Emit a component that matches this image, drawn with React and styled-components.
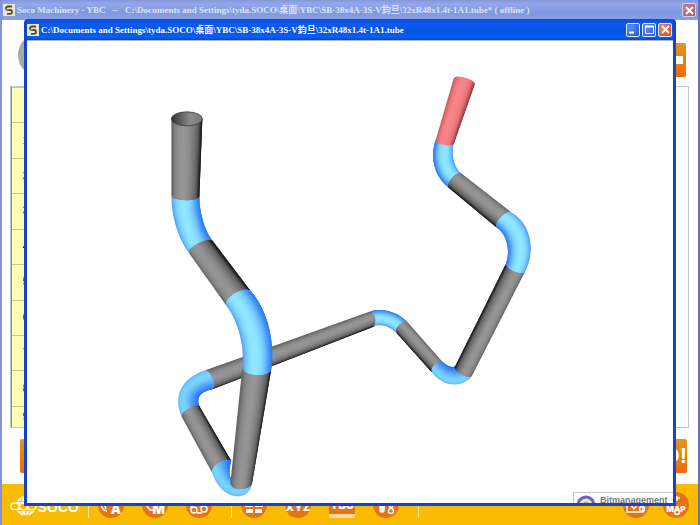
import React from "react";
import styled, { createGlobalStyle } from 'styled-components'

const path = "C:\\Documents and Settings\\tyda.SOCO\\桌面\\YBC\\SB-38x4A-3S-V鈞旦\\32xR48x1.4t-1A1.tube"

const steel = ['#606060', '#828282', '#909090', '#969696', '#949494', '#888888', '#767676', '#5c5c5c', '#101010']
const bend = ['#4a9cf4', '#76c8ff', '#88deff', '#90e8ff', '#8ee6ff', '#84daff', '#6ec2ff', '#4c9cf8', '#2b78ee']
const deepBend = ['#62bcfa', '#7ad4ff', '#78d0ff', '#6abcfe', '#54a2fa', '#3e8cf6', '#2270ea']
const marked = ['#c65a60', '#ee787c', '#f88688', '#f68486', '#f07e82', '#dc6e72', '#8a3a3c']

// a and b are the two long edges (2 points = straight, 4 = bezier), b is the darker side
// from / to push the ends out so they look round
const tubes = [
    { id: 'leg5', colors: steel, a: [[205, 370], [370, 311]], b: [[212, 389], [374, 326]], from: [4, 0], to: [4, -1] },
    { id: 'bend4', colors: deepBend, a: [[181, 416], [173, 397], [180, 378], [205, 370]], b: [[199, 406], [195, 395], [203, 391], [212, 389]], from: [-1, -3], to: [4, 0] },
    { id: 'bend5', colors: bend, a: [[373, 326], [382, 323], [390, 326], [397, 333]], b: [[370, 311], [383, 307], [398, 312], [408, 322]], from: [4, -1], to: [-3, -3] },
    { id: 'leg6', colors: steel, a: [[408, 322], [443, 362]], b: [[397, 333], [432, 372]], from: [-3, -3], to: [-2, -3] },
    { id: 'bend6', colors: deepBend, a: [[432, 372], [442, 386], [461, 389], [472, 376]], b: [[443, 362], [448, 366], [452, 368], [456, 366]], from: [-2, -3], to: [0, 2] },
    { id: 'bend8', colors: bend, a: [[454, 143], [451, 155], [455, 168], [462, 173]], b: [[436, 139], [430, 156], [434, 175], [449, 187]], from: [-1, 3], to: [-3, -3] },
    { id: 'leg8', colors: steel, a: [[462, 173], [512, 212]], b: [[449, 187], [497, 227]], from: [-3, -3], to: [-3, -3] },
    { id: 'bend7', colors: bend, a: [[512, 212], [531, 222], [537, 250], [525, 272]], b: [[497, 227], [508, 234], [511, 251], [506, 264]], from: [-3, -3], to: [-1, 3] },
    { id: 'leg7', colors: steel, a: [[525, 272], [472, 376]], b: [[506, 264], [455, 367]], from: [-1, 3], to: [-1, 3] },
    { id: 'end', colors: marked, a: [[454, 77], [436, 139]], b: [[475, 83], [454, 143]], from: [1, -3], to: [-1, 3] },
    { id: 'leg4', colors: steel, a: [[181, 416], [212, 473]], b: [[199, 406], [231, 461]], from: [-1, -3], to: [-3, -4] },
    { id: 'bend3', colors: deepBend, a: [[212, 473], [222, 503], [251, 502], [252, 482]], b: [[231, 461], [228, 470], [229, 478], [232, 484]], from: [-3, -4], to: [0, 3] },
    { id: 'leg3', colors: steel, a: [[242, 368], [230, 484]], b: [[271, 369], [252, 482]], from: [0, 6], to: [1, 6] },
    { id: 'bend1', colors: bend, a: [[171, 195], [171, 217], [178, 238], [189, 253]], b: [[199, 196], [199, 212], [204, 229], [212, 240]], from: [0, 4], to: [-4, -3] },
    { id: 'leg2', colors: steel, a: [[189, 253], [226, 305]], b: [[212, 240], [250, 290]], from: [-4, -3], to: [-4, -4] },
    { id: 'bend2', colors: bend, a: [[226, 305], [239, 322], [245, 350], [242, 368]], b: [[250, 290], [268, 310], [275, 343], [271, 369]], from: [-4, -4], to: [0, 6] },
    { id: 'leg1', colors: steel, a: [[171, 118], [171, 195]], b: [[202, 118], [199, 196]], from: [0, 7], to: [0, 4] },
]

const bands = 24

function mix(colors, u) {
    const at = u * (colors.length - 1)
    const i = Math.min(Math.floor(at), colors.length - 2)
    const rgb = [1, 3, 5].map((n) => {
        const c1 = parseInt(colors[i].slice(n, n + 2), 16)
        const c2 = parseInt(colors[i + 1].slice(n, n + 2), 16)
        return Math.round(c1 + (c2 - c1) * (at - i))
    })
    return `rgb(${rgb.join(',')})`
}

function line({ a, b, from, to }, u) {
    const round = Math.sqrt(Math.max(0, 1 - (2 * u - 1) ** 2))
    return a.map((p, i) => {
        const push = i === 0 ? from : i === a.length - 1 ? to : [0, 0]
        return [0, 1].map((k) => (p[k] + (b[i][k] - p[k]) * u + push[k] * round).toFixed(2))
    })
}

function draw(points) {
    const rest = points.slice(1).map((p) => p.join(' ')).join(' ')
    return `${points[0].join(' ')} ${points.length === 4 ? 'C' : 'L'} ${rest}`
}

// each band reaches under the next two, so no seam shows between them
function Tube({ tube }) {
    return (
        <g>
            {Array.from({ length: bands }, (_, i) => {
                const near = line(tube, i / bands)
                const far = line(tube, Math.min(1, (i + 3) / bands)).reverse()
                return <path
                    key={i}
                    d={`M ${draw(near)} L ${draw(far)} Z`}
                    fill={mix(tube.colors, (i + 0.5) / bands)}
                />
            })}
        </g>
    )
}

function Model() {
    return (
        <ModelStyled viewBox="27 40 646 463" role="img" aria-label="Bent tube">
            <defs>
                <linearGradient id="inside">
                    <stop offset="0" stopColor="#333" />
                    <stop offset="0.6" stopColor="#8a8a8a" />
                    <stop offset="1" stopColor="#777" />
                </linearGradient>
            </defs>
            {tubes.map((tube) => <Tube key={tube.id} tube={tube} />)}
            <ellipse cx="186.5" cy="118" rx="15.5" ry="7" fill="url(#inside)" stroke="#333" strokeWidth="0.8" />
        </ModelStyled>
    )
}

function AppMark() {
    return (
        <MarkStyled viewBox="0 0 12 12" aria-hidden="true">
            <rect width="12" height="12" fill="#e9e6d4" />
            <path d="M9 2.5 H5 Q3 2.5 3 4.2 Q3 6 5.5 6 H7 Q9 6 9 8 Q9 9.8 7 9.8 H4" fill="none" stroke="#4d4a35" strokeWidth="1.8" />
            <path d="M3 5 L6 6" stroke="#b99a30" strokeWidth="1" />
        </MarkStyled>
    )
}

function CloseIcon() {
    return (
        <svg width="9" height="9" viewBox="0 0 9 9" aria-hidden="true">
            <path d="M1 1 L8 8 M8 1 L1 8" stroke="#fff" strokeWidth="1.8" />
        </svg>
    )
}

function Globe() {
    return (
        <svg width="30" height="26" viewBox="0 0 30 26" aria-hidden="true">
            <circle cx="17" cy="14" r="11" fill="#fff" />
            <g fill="none" stroke="#fabb00" strokeWidth="1">
                <path d="M7 9 H27 M7 19 H27 M17 3 V25" />
                <ellipse cx="17" cy="14" rx="6" ry="11" />
            </g>
            <g fill="#fabb00" stroke="#fff" strokeWidth="1.6">
                <rect x="1" y="11" width="9" height="7" rx="3" />
                <rect x="10" y="11" width="9" height="7" rx="3" />
                <rect x="19" y="11" width="9" height="7" rx="3" />
            </g>
        </svg>
    )
}

const drawings = {
    auto: <path d="M5 8 L8 17 M3 13 Q5 19 9 19" />,
    manual: <path d="M4 13 L8 18 H11 M6 10 L10 14" />,
    gear: <g><circle cx="8" cy="18" r="3" /><circle cx="18" cy="17" r="3" /><path d="M4 17 Q7 10 15 14 M11 21 H16" /></g>,
    table: <g fill="#fff" stroke="none"><path d="M4 8 H12 V15 H4 Z M14 8 H22 V15 H14 Z M5 17 H12 V21 H5 Z M14 17 H21 V21 H14 Z" /></g>,
    heat: <g><rect x="7" y="7" width="4" height="13" rx="2" fill="#fff" /><circle cx="18" cy="19" r="2.5" /><circle cx="18" cy="14" r="1.5" /></g>,
    card: <g><path d="M4 9 V20 H20 V12 M7 12 L11 17 L15 12" /><circle cx="19" cy="17" r="2.5" /></g>,
    map: <g><circle cx="14" cy="20" r="2.5" /><path d="M14 4 V9 M10 6 H17" /></g>,
}

const mainTools = [
    { id: 'auto', text: 'A', label: 'Auto', side: true },
    { id: 'manual', text: 'M', label: 'Manual', side: true },
    { id: 'gear', label: 'Settings' },
]

const dataTools = [
    { id: 'table', label: 'Table' },
    { id: 'xyz', text: 'XYZ', label: 'XYZ' },
    { id: 'ybc', text: 'YBC', label: 'YBC', active: true },
    { id: 'heat', label: 'Tooling' },
]

const sideTools = [
    { id: 'card', label: 'Card' },
    { id: 'map', text: 'MAP', label: 'Map', small: true },
]

function Tools({ items, tight }) {
    return (
        <ToolGroup $tight={tight}>
            {items.map((item) => {
                return <Tool
                    key={item.id}
                    aria-label={item.label}
                    $active={item.active}
                    $small={item.small}
                    $side={item.side}
                >
                    {drawings[item.id] && <svg viewBox="0 0 26 26" aria-hidden="true">{drawings[item.id]}</svg>}
                    {item.text && <span>{item.text}</span>}
                </Tool>
            })}
        </ToolGroup>
    )
}

function App() {
    return (
        <Desktop>
            <GlobalStyle />
            <MainTitle>
                <AppMark />
                <h1>Soco Machinery - YBC &nbsp; -- &nbsp; {path}* ( offline )</h1>
                <WinButton aria-label="Close main window" $kind="faded"><CloseIcon /></WinButton>
            </MainTitle>
            <Page>
                <PageHead>
                    <RoundButton aria-label="Back" />
                    <OrangeButton aria-label="Menu"><i /></OrangeButton>
                </PageHead>
                <Sheet>
                    <ol>
                        <li />
                        {[1, 2, 3, 4, 5, 6, 7, 8, 9].map((n) => <li key={n}>{n}</li>)}
                    </ol>
                </Sheet>
                <PageFoot>
                    <OrangeButton aria-label="Previous" />
                    <OrangeButton>GO!</OrangeButton>
                </PageFoot>
            </Page>
            <Toolbar>
                <Brand><Globe /><span>SOCO</span></Brand>
                <Divider />
                <Tools items={mainTools} />
                <Divider />
                <Tools items={dataTools} />
                <Divider />
                <Spacer />
                <Tools items={sideTools} tight />
            </Toolbar>
            <Viewer>
                <ViewerTitle>
                    <AppMark />
                    <h2>{path}</h2>
                    <WinButton aria-label="Minimize"><svg width="9" height="9" viewBox="0 0 9 9"><path d="M0 7.5 H5" stroke="#fff" strokeWidth="2" /></svg></WinButton>
                    <WinButton aria-label="Maximize"><svg width="9" height="9" viewBox="0 0 9 9"><path d="M0.5 1 V8.5 H8.5 V1" fill="none" stroke="#fff" /><path d="M0 1.5 H9" stroke="#fff" strokeWidth="2" /></svg></WinButton>
                    <WinButton aria-label="Close" $kind="close"><CloseIcon /></WinButton>
                </ViewerTitle>
                <Canvas>
                    <Model />
                    <Credit>
                        <svg width="20" height="10" viewBox="0 0 20 10" aria-hidden="true">
                            <circle cx="10" cy="11" r="8" fill="#f3e7a8" stroke="#6a62c4" strokeWidth="3" />
                            <circle cx="10" cy="11" r="3" fill="#fff" stroke="#a99a70" />
                        </svg>
                        <span>Bitmanagement</span>
                    </Credit>
                </Canvas>
            </Viewer>
        </Desktop>
    )
}

const GlobalStyle = createGlobalStyle`
    * {
        box-sizing: border-box;
    }
    body {
        margin: 0;
        overflow: hidden;
    }
    h1, h2, ol {
        margin: 0;
        padding: 0;
    }
    button {
        padding: 0;
        border: none;
        font: inherit;
    }
`;

const Desktop = styled.div`
    position: relative;
    display: flex;
    flex-direction: column;
    height: 100vh;
    border-left: 2px solid #8490da;
    border-right: 2px solid #6870c0;
    background: #fff;
    font-family: "Liberation Sans", Arial, sans-serif;
`;

const titleBar = `
    display: flex;
    align-items: center;
    gap: 2px;
    flex: none;
    height: 20px;
    h1, h2 {
        flex: 1;
        min-width: 0;
        overflow: hidden;
        white-space: nowrap;
        font-family: "Liberation Serif", "Noto Sans CJK TC", serif;
        font-size: 9px;
        line-height: 16px;
        font-weight: bold;
    }
`;

const MainTitle = styled.header`
    ${titleBar}
    padding: 0 2px 0 1px;
    background: linear-gradient(#8496dc, #94a8e8 20%, #7f98e0 60%, #8aa0e4);
    color: #dde4f8;
`;

const MarkStyled = styled.svg`
    flex: none;
    width: 12px;
    height: 12px;
`;

const winColors = {
    plain: 'radial-gradient(circle at 30% 30%, #5c8df4, #2456d8)',
    close: 'radial-gradient(circle at 30% 30%, #ee8464, #d8431c)',
    faded: 'radial-gradient(circle at 30% 30%, #c88092, #b0566c)',
};

const WinButton = styled.button`
    display: flex;
    align-items: center;
    justify-content: center;
    flex: none;
    width: 14px;
    height: 14px;
    border: 1px solid ${(p) => (p.$kind === 'faded' ? '#ccd2f0' : '#e4ecfc')};
    border-radius: 2px;
    background: ${(p) => winColors[p.$kind || 'plain']};
`;

const Page = styled.main`
    display: flex;
    flex-direction: column;
    flex: 1;
    min-height: 0;
    padding: 0 9px 0 8px;
`;

const PageHead = styled.div`
    display: flex;
    align-items: flex-end;
    justify-content: space-between;
    height: 66px;
    padding: 0 3px 9px 8px;
`;

const RoundButton = styled.button`
    width: 44px;
    height: 44px;
    border-radius: 50%;
    background: #a4aaa6;
`;

const OrangeButton = styled.button`
    display: flex;
    align-items: center;
    justify-content: flex-end;
    width: 40px;
    height: 34px;
    border-radius: 2px;
    background: linear-gradient(#dd981c, #ea7a10 60%, #e86c0c);
    color: #fff;
    font-size: 22px;
    font-weight: bold;
    i {
        width: 16px;
        height: 8px;
        margin-right: 3px;
        background: #fff;
    }
`;

const Sheet = styled.section`
    flex: 1;
    min-height: 0;
    border: 1px solid #c4c4d0;
    ol {
        display: grid;
        grid-template-rows: repeat(9, 5fr) 3fr;
        width: 28px;
        height: 100%;
        border-left: 1px solid #8c8c70;
        background: #ffffb8;
        list-style: none;
    }
    li {
        display: flex;
        align-items: center;
        justify-content: center;
        min-height: 0;
        border-top: 1px solid #c8c894;
        font-size: 10px;
        line-height: 12px;
    }
`;

const PageFoot = styled.div`
    display: flex;
    align-items: center;
    justify-content: space-between;
    height: 56px;
    padding: 0 2px 0 10px;
`;

const Toolbar = styled.nav`
    display: flex;
    align-items: center;
    gap: 9px;
    flex: none;
    height: 41px;
    padding: 0 9px 0 8px;
    background: #fabb00;
`;

const Brand = styled.div`
    display: flex;
    align-items: center;
    width: 69px;
    color: #fff;
    font-size: 14px;
    line-height: 14px;
    font-weight: bold;
    span {
        padding-top: 4px;
    }
`;

const Divider = styled.i`
    width: 1px;
    height: 26px;
    background: #fde9a8;
`;

const Spacer = styled.div`
    flex: 1;
`;

const ToolGroup = styled.div`
    display: flex;
    gap: ${(p) => (p.$tight ? '14px' : '18px')};
    margin-right: ${(p) => (p.$tight ? '0' : '10px')};
`;

const Tool = styled.button`
    display: grid;
    place-items: ${(p) => (p.$side ? 'end' : 'center')};
    width: 26px;
    height: 26px;
    border-radius: ${(p) => (p.$active ? '3px' : '50%')};
    border-bottom: ${(p) => (p.$active ? '4px solid #fcd9a0' : 'none')};
    background: #e47414;
    color: #fff;
    font-family: Inter, "Liberation Sans", sans-serif;
    font-size: ${(p) => (p.$small ? '8px' : p.$side ? '13px' : '11px')};
    line-height: 12px;
    font-weight: 900;
    svg {
        grid-area: 1 / 1;
        width: 26px;
        height: 26px;
        fill: none;
        stroke: #fff;
        stroke-width: 1.5;
    }
    span {
        grid-area: 1 / 1;
        padding: ${(p) => (p.$side ? '0 3px 3px 0' : p.$small ? '8px 0 0' : '4px 0 0')};
    }
`;

const Viewer = styled.section`
    position: absolute;
    inset: 19px 22px 19px 22px;
    display: flex;
    flex-direction: column;
    border: solid #1644c8;
    border-width: 0 3px 3px 3px;
    border-radius: 4px 4px 0 0;
    background: #fff;
`;

const ViewerTitle = styled.header`
    ${titleBar}
    height: 21px;
    padding: 0 1px 0 0;
    background: linear-gradient(#0a4cd4, #0a5cf0 25%, #0553e4 60%, #0660fa 85%, #0a48c8);
    color: #fff;
`;

const Canvas = styled.div`
    position: relative;
    flex: 1;
    min-height: 0;
    border-top: 1px solid #b8b8a8;
`;

const ModelStyled = styled.svg`
    display: block;
    width: 100%;
    height: 100%;
`;

const Credit = styled.div`
    position: absolute;
    right: 0;
    bottom: 0;
    display: flex;
    align-items: flex-start;
    gap: 4px;
    width: 100px;
    height: 11px;
    padding: 1px 0 0 2px;
    overflow: hidden;
    border: solid #c8c8c8;
    border-width: 1px 0 0 1px;
    color: #77777c;
    font-size: 9px;
    line-height: 12px;
    font-weight: bold;
`;

export default App
